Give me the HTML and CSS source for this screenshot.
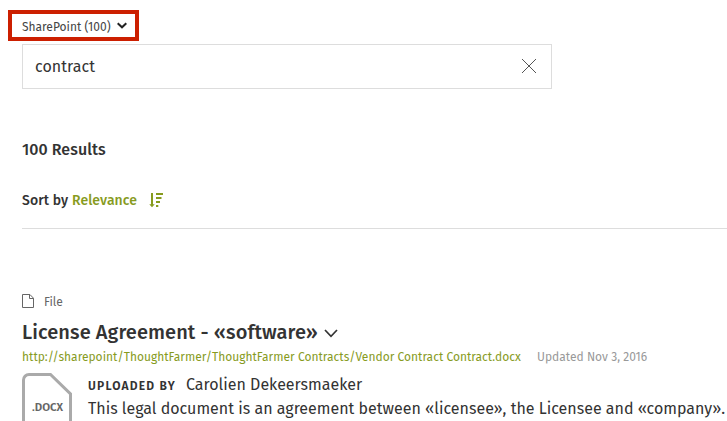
FILE: index.html
```html
<!DOCTYPE html>
<html lang="en">
<head>
<meta charset="utf-8">
<title>Search results</title>
<link rel="stylesheet" href="styles.css">
</head>
<body>
<main class="page">
  <button class="source" type="button">
    <span class="source-label">SharePoint (100)</span>
    <svg class="source-chevron" width="10" height="7" viewBox="0 0 10 7"><path d="M.7 1.200 5 5.300 9.300 1.200"/></svg>
  </button>
  <div class="search">
    <span class="query">contract</span>
    <svg class="clear" width="14" height="14" viewBox="0 0 14 14"><path d="M0 0 14 14M14 0 0 14"/></svg>
  </div>
  <h1 class="count">100 Results</h1>
  <div class="sort">
    <span class="sort-label">Sort by</span>
    <a class="sort-value">Relevance</a>
    <svg class="sort-icon" width="15" height="15" viewBox="0 0 15 15"><path d="M2 0h2v11.300h1.700L3 14.300.300 11.300H2zM7 0h7v2H7zM7 4h5.500v2H7zM7 8h4v2H7zM7 12h2.300v2H7z"/></svg>
  </div>
  <article class="result">
    <div class="type">
      <svg class="type-icon" width="12" height="14" viewBox="0 0 12 14"><path d="M.5.5h7.400l3.600 3.700v9.300H.5zM7.500.5v4h4"/></svg>
      <span class="type-label">File</span>
    </div>
    <h2 class="title"><span class="title-text">License Agreement - «software»</span><svg class="title-chevron" width="14" height="9" viewBox="0 0 14 9"><path d="M1 1 7 7.300 13 1"/></svg></h2>
    <div class="meta">
      <a class="url">http://sharepoint/ThoughtFarmer/ThoughtFarmer Contracts/Vendor Contract Contract.docx</a>
      <span class="updated">Updated Nov 3, 2016</span>
    </div>
    <div class="body">
      <svg class="doc" width="50" height="66" viewBox="0 0 50 66"><path d="M7 1.500h21.500L48.500 21v38a5 5 0 0 1-5 5H6.500a5 5 0 0 1-5-5V7a5.500 5.500 0 0 1 5.500-5.500z"/><text x="10" y="38" textLength="31" lengthAdjust="spacingAndGlyphs">.DOCX</text></svg>
      <div class="details">
        <div class="author"><span class="author-label">UPLOADED BY</span><span class="author-name">Carolien Dekeersmaeker</span></div>
        <div class="excerpt">This legal document is an agreement between «licensee», the Licensee and «company».</div>
      </div>
    </div>
  </article>
</main>
</body>
</html>
```
FILE: styles.css
```css
* { box-sizing: border-box; }
html, body { margin: 0; height: 421px; overflow: hidden; background: #fff; }
body { font-family: "Fira Sans", "Noto Sans", "Open Sans", sans-serif; color: #333; }
svg { flex: none; fill: none; stroke: #333; }
h1, h2 { margin: 0; }
span, a { white-space: nowrap; }
.page { padding: 10px 0 0 22px; }
.source { display: flex; align-items: center; width: 131px; height: 31px; margin-left: -14px; padding: 0 0 0 10px; border: 4px solid #cc1f00; background: #fff; font: 12px/16px "Fira Sans", "Noto Sans", sans-serif; color: #444; }
.source-label { width: 89px; text-align: left; padding-top: 2px; }
.source-chevron { margin-left: 6px; stroke: #222; stroke-width: 2; }
.search { display: flex; align-items: center; justify-content: space-between; width: 530px; height: 45px; margin-top: 3px; padding: 0 15px 0 12px; border: 1px solid #ddd; }
.query { font-size: 16px; letter-spacing: .05px; }
.clear { margin-top: -1px; stroke: #555; stroke-width: 1; }
.count { margin-top: 49px; font-size: 16px; line-height: 24px; font-weight: 500; letter-spacing: .06px; }
.sort { display: flex; align-items: center; height: 20px; margin-top: 29px; font-size: 14px; line-height: 20px; font-weight: 500; letter-spacing: .08px; }
.sort-label { width: 50px; }
.sort-value { width: 77px; color: #879b1e; }
.sort-icon { margin-top: -2px; fill: #879b1e; stroke: none; }
.result { margin-top: 17px; padding-top: 62px; border-top: 1px solid #ddd; }
.type { display: flex; align-items: center; height: 20px; gap: 10px; font-size: 12px; color: #666; }
.type-label { padding-top: 1px; }
.type-icon { stroke: #666; }
.title { display: flex; align-items: center; height: 30px; margin-top: 6px; font-size: 20px; line-height: 30px; font-weight: 500; letter-spacing: .1px; }
.title-text { width: 302px; }
.title-chevron { margin-top: 2px; stroke-width: 1.7; }
.meta { display: flex; height: 18px; margin-top: 1px; font-size: 12px; line-height: 18px; letter-spacing: .01px; }
.url { width: 515px; color: #879b1e; }
.updated { color: #999; }
.body { display: flex; margin-top: 7px; }
.doc path { stroke: #aaa; stroke-width: 3; }
.doc text { fill: #666; stroke: none; font-size: 11.5px; font-weight: 600; }
.details { margin-left: 16px; }
.author { display: flex; align-items: center; height: 24px; }
.author-label { width: 98px; padding-top: 1px; font-size: 12px; font-weight: 600; letter-spacing: 1.2px; }
.author-name, .excerpt { font-size: 16px; line-height: 24px; white-space: nowrap; }
```
